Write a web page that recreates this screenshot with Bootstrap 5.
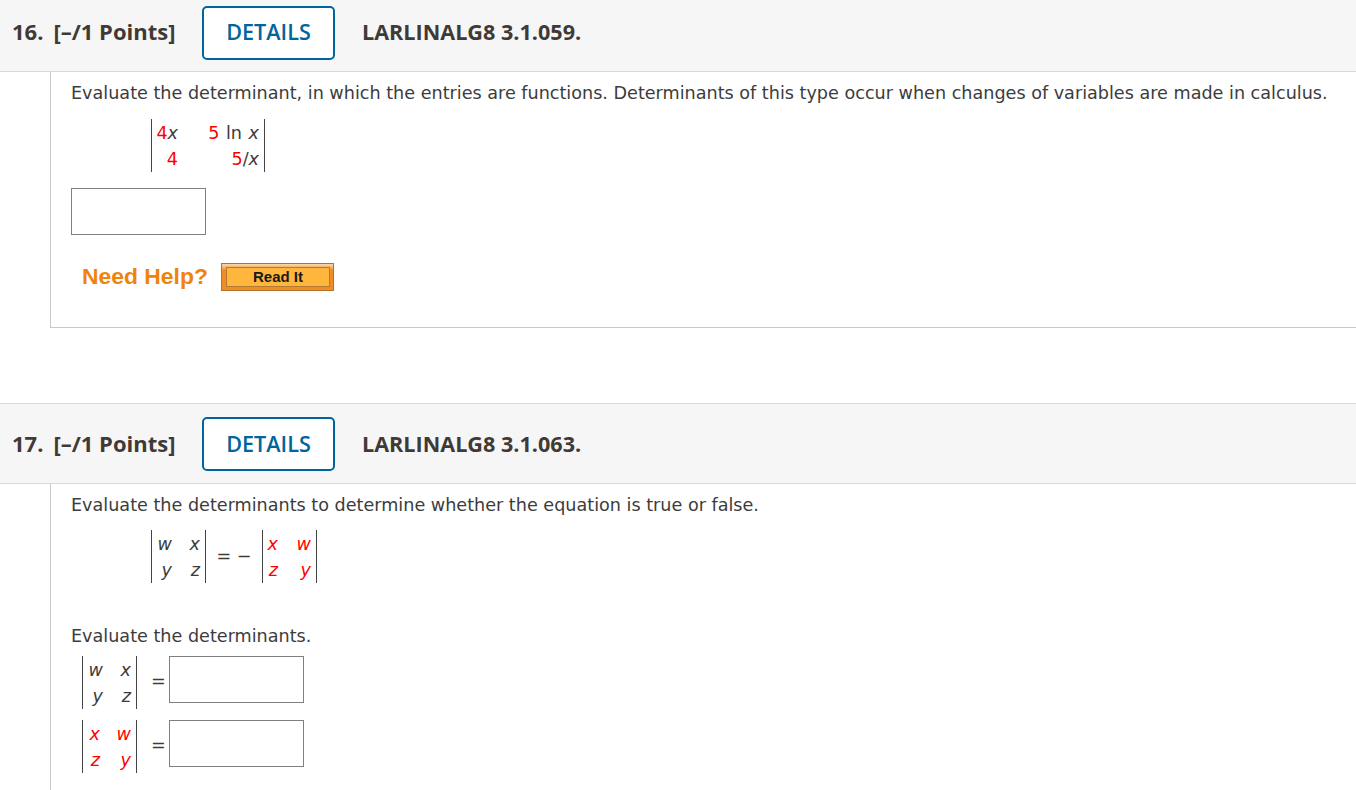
<!DOCTYPE html>
<html lang="en">
<head>
<meta charset="UTF-8">
<title>Questions</title>
<link href="https://cdn.jsdelivr.net/npm/bootstrap@5.3.0/dist/css/bootstrap.min.css" rel="stylesheet">
<style>
body { font-family: "DejaVu Sans", sans-serif; font-size: 17.6px; color: #3c3c3c; background: #fff; overflow: hidden; }
.q-head { height: 72px; background: #f6f6f6; border-bottom: 1px solid #d9d9d9; padding-left: 12px; padding-bottom: 6px; font-family: "Open Sans", sans-serif; font-size: 21.6px; font-weight: 700; color: #3f3a36; }
.q-head.second { height: 81px; border-top: 1px solid #d9d9d9; padding-top: 1px; padding-bottom: 0; margin-top: 75px; }
.q-points { width: 190px; font-size: 22px; padding-bottom: 2px; }
.q-num { margin-right: 10px; }
.q-details { width: 133px; height: 54px; border: 2px solid #00659c; border-radius: 5px; color: #00659c; background: #fff; font-weight: 600; margin-right: 27px; }
.q-body { margin-left: 50px; border-left: 1px solid #c8c8c8; padding-left: 20px; }
.q-body.first { height: 256px; border-bottom: 1px solid #c8c8c8; padding-top: 9px; }
.q-body.last { padding-top: 9px; height: 320px; }
.q-text { line-height: 25px; white-space: nowrap; }
.det { display: inline-grid; border-left: 1px solid #444; border-right: 1px solid #444; padding: 2px 5px 0 4px; line-height: 25.5px; height: 53px; text-align: right; }
.red { color: #f00; }
.det-a { grid-template-columns: 22px 81px; margin-left: 80px; margin-top: 13px; line-height: 24.5px; word-spacing: 1px; }
.det-b { grid-template-columns: 16px 28px; }
.det-c { grid-template-columns: 11px 33px; }
.det-d { grid-template-columns: 13px 31px; }
.ans { display: block; width: 135px; height: 47px; border: 1px solid #808080; background: #fff; }
.help-row { margin-top: 24px; margin-left: 11px; }
.help-txt { font-family: "Liberation Sans", sans-serif; font-weight: 700; font-size: 22.9px; color: #f0830a; width: 139px; padding-bottom: 2px; }
.read-it { width: 113px; height: 28px; border: 1px solid #b0742c; background: linear-gradient(#fbd9ae, #f08c22 25%, #f08c22); padding: 3px 3px 3px 4px; }
.read-in { height: 100%; border: 1px solid #b57a30; background: #ffb63c; font-family: "Liberation Sans", sans-serif; font-weight: 700; font-size: 15px; color: #1a1a1a; padding-top: 1px; }
.eq-row { margin-top: 12px; margin-left: 80px; }
.op { width: 56px; }
.line-eval { margin-top: 41px; }
.res-row { margin-left: 11px; height: 52px; margin-top: 12px; }
.line-eval + .res-row { margin-top: 7px; }
.res-row .op { width: 32px; padding-left: 14px; line-height: 50px; }
</style>
</head>
<body>

<div class="q-head d-flex align-items-center">
  <div class="q-points"><span class="q-num">16.</span>[–/1 Points]</div>
  <div class="q-details d-flex align-items-center justify-content-center">DETAILS</div>
  <div>LARLINALG8 3.1.059.</div>
</div>
<div class="q-body first">
  <div class="q-text">Evaluate the determinant, in which the entries are functions. Determinants of this type occur when changes of variables are made in calculus.</div>
  <div class="det det-a">
    <span><span class="red">4</span><i>x</i></span><span><span class="red">5</span> ln <i>x</i></span>
    <span class="red">4</span><span><span class="red">5</span>/<i>x</i></span>
  </div>
  <input class="ans mt-3" type="text" aria-label="answer">
  <div class="help-row d-flex align-items-center">
    <div class="help-txt">Need Help?</div>
    <div class="read-it"><div class="read-in d-flex align-items-center justify-content-center">Read It</div></div>
  </div>
</div>

<div class="q-head second d-flex align-items-center">
  <div class="q-points"><span class="q-num">17.</span>[–/1 Points]</div>
  <div class="q-details d-flex align-items-center justify-content-center">DETAILS</div>
  <div>LARLINALG8 3.1.063.</div>
</div>
<div class="q-body last">
  <div class="q-text">Evaluate the determinants to determine whether the equation is true or false.</div>
  <div class="eq-row d-flex align-items-center">
    <div class="det det-b"><i>w</i><i>x</i><i>y</i><i>z</i></div>
    <div class="op text-center">= −</div>
    <div class="det det-c red"><i>x</i><i>w</i><i>z</i><i>y</i></div>
  </div>
  <div class="q-text line-eval">Evaluate the determinants.</div>
  <div class="res-row d-flex">
    <div class="det det-b"><i>w</i><i>x</i><i>y</i><i>z</i></div>
    <div class="op">=</div>
    <input class="ans" type="text" aria-label="first determinant">
  </div>
  <div class="res-row d-flex">
    <div class="det det-d red"><i>x</i><i>w</i><i>z</i><i>y</i></div>
    <div class="op">=</div>
    <input class="ans" type="text" aria-label="second determinant">
  </div>
</div>

<script src="https://cdn.jsdelivr.net/npm/bootstrap@5.3.0/dist/js/bootstrap.bundle.min.js"></script>
</body>
</html>
